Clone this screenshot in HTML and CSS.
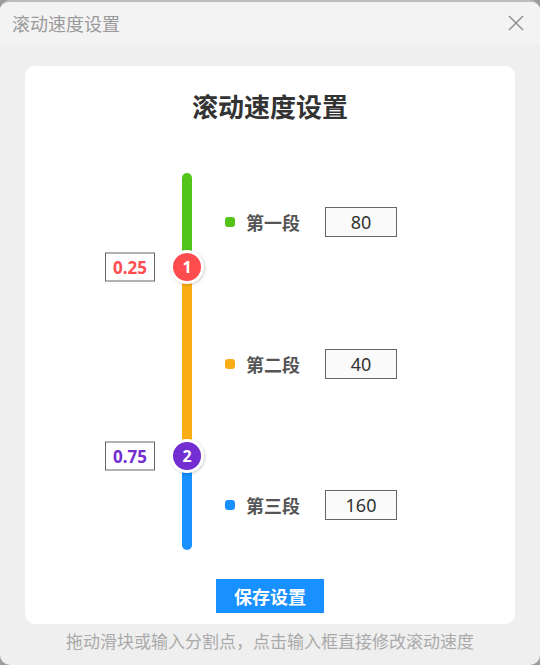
FILE: index.html
```html
<!DOCTYPE html>
<html lang="zh-CN">
<head>
<meta charset="utf-8">
<title>滚动速度设置</title>
<link rel="stylesheet" href="styles.css">
</head>
<body>
<div class="window">
  <div class="titlebar">
    <span class="titlebar-text">滚动速度设置</span>
    <svg class="close" width="16" height="16" viewBox="0 0 16 16"><path d="M1 1 L15 15 M15 1 L1 15" stroke="#8a8a8a" stroke-width="1.4" fill="none"/></svg>
  </div>
  <div class="content">
    <div class="card">
      <h1 class="card-title">滚动速度设置</h1>
      <div class="slider">
        <div class="splits">
          <input class="split-input split-red" type="text" value="0.25" style="top:25%">
          <input class="split-input split-purple" type="text" value="0.75" style="top:75%">
        </div>
        <div class="segments">
          <div class="seg" style="flex:25">
            <div class="bar bar-first" style="background:#52c41a"></div>
            <div class="seg-row">
              <span class="dot" style="background:#52c41a"></span>
              <span class="seg-name">第一段</span>
              <input class="seg-input" type="text" value="80">
            </div>
          </div>
          <div class="seg" style="flex:50">
            <div class="bar" style="background:#faad14"></div>
            <div class="seg-row">
              <span class="dot" style="background:#faad14"></span>
              <span class="seg-name">第二段</span>
              <input class="seg-input" type="text" value="40">
            </div>
          </div>
          <div class="seg" style="flex:25">
            <div class="bar bar-last" style="background:#1890ff"></div>
            <div class="seg-row">
              <span class="dot" style="background:#1890ff"></span>
              <span class="seg-name">第三段</span>
              <input class="seg-input" type="text" value="160">
            </div>
          </div>
          <div class="handle handle-red" style="top:25%">1</div>
          <div class="handle handle-purple" style="top:75%">2</div>
        </div>
      </div>
      <div class="actions">
        <button class="save-btn" type="button">保存设置</button>
      </div>
    </div>
    <p class="hint">拖动滑块或输入分割点，点击输入框直接修改滚动速度</p>
  </div>
</div>
</body>
</html>
```
FILE: styles.css
```css
html, body {
  margin: 0;
  padding: 0;
}
body {
  background: #9c9c9c;
  font-family: "Noto Sans", "Noto Sans CJK SC", sans-serif;
  width: 540px;
  height: 665px;
  overflow: hidden;
}
.window {
  width: 540px;
  height: 665px;
  box-sizing: border-box;
  border-radius: 10px;
  border-top: 2px solid #bdbdbd;
  background: #efefef;
  overflow: hidden;
}
.titlebar {
  height: 42px;
  background: #f3f3f3;
  display: flex;
  align-items: center;
  justify-content: space-between;
  padding: 0 16px 0 12px;
}
.titlebar-text {
  font-family: "Noto Sans CJK SC", sans-serif;
  font-size: 18px;
  color: #9a9a9a;
  line-height: 24px;
}
.close {
  display: block;
}
.content {
  padding: 22px 25px 0;
}
.card {
  background: #fff;
  border-radius: 10px;
  height: 558px;
  box-sizing: border-box;
  padding-top: 20px;
}
.card-title {
  margin: 0;
  text-align: center;
  font-family: "Noto Sans CJK SC", sans-serif;
  font-size: 26px;
  font-weight: 700;
  line-height: 40px;
  color: #333;
}
.slider {
  display: flex;
  height: 377px;
  margin: 47px 0 0 80px;
}
.splits {
  position: relative;
  width: 50px;
}
.split-input {
  position: absolute;
  left: 0;
  transform: translateY(-50%);
  width: 50px;
  height: 29px;
  box-sizing: border-box;
  border: 1px solid #666;
  background: #fff;
  padding: 0;
  text-align: center;
  font-family: "Noto Sans", sans-serif;
  font-size: 17px;
  font-weight: 700;
  outline: none;
}
.split-red { color: #ff4d4f; }
.split-purple { color: #722ed1; }
.segments {
  position: relative;
  display: flex;
  flex-direction: column;
  margin-left: 27px;
}
.seg {
  display: flex;
  align-items: center;
  min-height: 0;
}
.bar {
  width: 10px;
  align-self: stretch;
}
.bar-first { border-radius: 5px 5px 0 0; }
.bar-last { border-radius: 0 0 5px 5px; }
.seg-row {
  display: flex;
  align-items: center;
  margin-left: 33px;
  margin-top: 4px;
}
.dot {
  width: 10px;
  height: 10px;
  border-radius: 3px;
}
.seg-name {
  margin-left: 11px;
  font-family: "Noto Sans CJK SC", sans-serif;
  font-size: 18px;
  font-weight: 700;
  color: #555;
  line-height: 24px;
  width: 54px;
  white-space: nowrap;
}
.seg-input {
  margin-left: 25px;
  width: 72px;
  height: 30px;
  box-sizing: border-box;
  border: 1px solid #666;
  background: #fafafa;
  padding: 0;
  text-align: center;
  font-family: "Noto Sans", sans-serif;
  font-size: 18px;
  color: #333;
  outline: none;
}
.handle {
  position: absolute;
  left: 5px;
  transform: translate(-50%, -50%);
  width: 28px;
  height: 28px;
  border: 3px solid #fff;
  border-radius: 50%;
  box-shadow: 1px 1px 3px rgba(0,0,0,0.18);
  color: #fff;
  font-family: "Noto Sans", sans-serif;
  font-weight: 700;
  font-size: 16px;
  line-height: 28px;
  text-align: center;
  z-index: 2;
}
.handle-red { background: #ff4d4f; }
.handle-purple { background: #722ed1; }
.actions {
  display: flex;
  justify-content: center;
  margin-top: 29px;
}
.save-btn {
  width: 108px;
  height: 34px;
  border: none;
  border-radius: 0;
  background: #1890ff;
  color: #fff;
  font-family: "Noto Sans CJK SC", sans-serif;
  font-size: 18px;
  font-weight: 700;
  padding: 0;
}
.hint {
  margin: 5px 0 0;
  text-align: center;
  font-family: "Noto Sans CJK SC", sans-serif;
  font-size: 17px;
  line-height: 24px;
  color: #aaa;
}
```
